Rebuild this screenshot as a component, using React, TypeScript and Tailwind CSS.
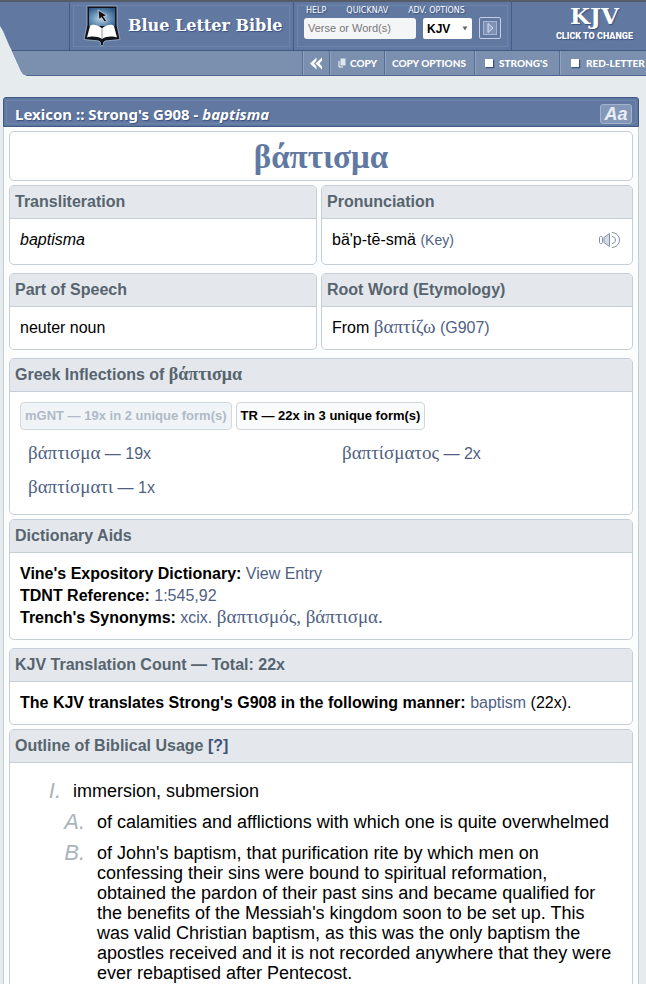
import type { ReactNode } from 'react';

const shadow = '[text-shadow:1px_1px_1px_#3a5180]';
const greekFont = "font-['Liberation_Serif',serif]";
const linkColor = 'text-[#4f5f83]';

const inflections = [
  { word: 'βάπτισμα', count: '19x' },
  { word: 'βαπτίσματος', count: '2x' },
  { word: 'βαπτίσματι', count: '1x' },
];

const outline = [
  { mark: 'A.', text: 'of calamities and afflictions with which one is quite overwhelmed' },
  {
    mark: 'B.',
    text: "of John's baptism, that purification rite by which men on confessing their sins were bound to spiritual reformation, obtained the pardon of their past sins and became qualified for the benefits of the Messiah's kingdom soon to be set up. This was valid Christian baptism, as this was the only baptism the apostles received and it is not recorded anywhere that they were ever rebaptised after Pentecost.",
  },
];

const Greek = ({ children }: { children: ReactNode }) => (
  <span lang="el" className={`text-[19px] leading-none ${greekFont}`}>{children}</span>
);

const Card = ({ title, children }: { title: ReactNode; children: ReactNode }) => (
  <section className="overflow-hidden rounded-[5px] border border-[#c5cdd7] bg-white">
    <h2 className="h-[33px] border-b border-[#c5cdd7] bg-[#e4e8ec] px-[5px] text-base leading-8 font-bold text-[#57646f]">
      {title}
    </h2>
    {children}
  </section>
);

const Logo = () => (
  <svg width="40" height="42" viewBox="0 1 40 42" className="overflow-visible" aria-hidden="true">
    <defs>
      <radialGradient id="screen" cx="0.45" cy="0.6" r="0.7">
        <stop offset="0" stopColor="#b9d3e6" />
        <stop offset="0.5" stopColor="#6a93b8" />
        <stop offset="1" stopColor="#2b5684" />
      </radialGradient>
    </defs>
    <path d="M5.500 1h28q1.500 0 1.500 1.500V20l3 14.500-15 1.500-1.500 1.500v2l-1.500 1.500-1.500-1.500v-2L17 36 2 34.500 5 20V2.500Q5 1 5.500 1z" fill="#11151b" stroke="#a9bbd0" strokeWidth="0.8" />
    <rect x="7" y="3" width="26" height="18" fill="url(#screen)" />
    <path d="M16 5l1 9.500 2.500-2 3 4.500 2-1.500-3-4 3.500-1z" fill="#111" stroke="#e8eef4" strokeWidth="0.7" />
    <path d="M20 23.500C16 19.500 10 19 8 21L5 32.500c4-1.500 10.500-1.500 15 1.500 4.500-3 11-3 15-1.500l-3-11.500C30 19 24 19.500 20 23.500z" fill="#fff" />
    <path d="M20 23.500V34" stroke="#8e98a4" strokeWidth="1" />
  </svg>
);

const Speaker = () => (
  <svg width="23" height="18" viewBox="0 0 23 18" fill="none" stroke="#8092ac" strokeWidth="1" aria-hidden="true">
    <rect x="0.500" y="5.500" width="3" height="7" rx="1" />
    <path d="M5 6.500L10.500 2.500v13L5 11.500z" fill="#d3dbe6" />
    <path d="M13 5.500a3.500 3.500 0 010 7M13 1.500a7.500 7.500 0 010 15" />
  </svg>
);

const toolItem = 'flex h-full shrink-0 items-center border-l border-[#566d96] shadow-[inset_1px_0_0_#8fa2bf] whitespace-nowrap';

const Toolbar = () => (
  <nav className="h-[25px] bg-[#4c6593] [clip-path:polygon(12px_0,100%_0,100%_100%,27px_100%,23px_23px,21px_20px)]">
    <div className={`flex h-6 items-center justify-end bg-[#7b8fae] font-['Lato',sans-serif] text-[10px] font-black text-white ${shadow}`}>
      <button type="button" aria-label="Collapse" className={`${toolItem} w-[27px] justify-center`}>
        <svg width="14" height="13" viewBox="0 0 14 13" fill="#fff" aria-hidden="true">
          <path d="M7.500 0.500L1 6.500l6.500 6V9.500L5 6.500l2.500-3z" />
          <path d="M13 0.500L6.500 6.500l6.500 6V9.500L10.500 6.500l2.500-3z" />
        </svg>
      </button>
      <button type="button" className={`${toolItem} w-[55px] gap-1 pl-2`}>
        <svg width="8" height="10" viewBox="0 0 8 10" aria-hidden="true">
          <path d="M1 3v6h4" fill="none" stroke="#fff" />
          <rect x="2.500" y="0.500" width="5" height="7" fill="#dfe8f3" />
        </svg>
        COPY
      </button>
      <button type="button" className={`${toolItem} w-[90px] pl-[7px]`}>COPY OPTIONS</button>
      <button type="button" className={`${toolItem} w-[85px] gap-[6px] pl-2.5`}>
        <span className="size-2 bg-white shadow-[1px_1px_1px_#3a5180]" />
        STRONG'S
      </button>
      <button type="button" className={`${toolItem} w-[87px] gap-[7px] pl-[11px]`}>
        <span className="size-2 bg-white shadow-[1px_1px_1px_#3a5180]" />
        RED-LETTER
      </button>
    </div>
  </nav>
);

const panel = 'm-[3px] border border-[#6d84ab]';

const Header = () => (
  <header className="border-t-2 border-[#555c68]">
    <div className="flex h-[49px] border-b border-[#3f5987] bg-[#6179a1] [clip-path:polygon(0_0,100%_0,100%_100%,12px_100%,9px_43px,3px_29px,0_24px)]">
      <div className="w-[69px] shrink-0" />
      <div className="w-56 shrink-0 border-l border-[#425c8b]">
        <a href="#home" className={`${panel} flex h-[42px] items-start gap-1.5 pl-2`}>
          <Logo />
          <span className={`pt-2.5 font-['DejaVu_Serif',serif] text-[16px] leading-5 font-bold whitespace-nowrap text-white ${shadow}`}>
            Blue Letter Bible
          </span>
        </a>
      </div>
      <form className="w-[218px] shrink-0 border-l border-[#425c8b]">
        <div className={`${panel} h-[42px] pl-[6px]`}>
          <div className={`flex h-2.5 items-center gap-5 pl-[2px] font-['DejaVu_Sans',sans-serif] text-[8px] leading-[10px] whitespace-nowrap text-white ${shadow}`}>
            <a href="#help">HELP</a>
            <a href="#quicknav">QUICKNAV</a>
            <a href="#options">ADV. OPTIONS</a>
          </div>
          <div className="flex items-center gap-[7px] pt-px">
            <input
              aria-label="Verse or Word(s)"
              placeholder="Verse or Word(s)"
              className="h-[21px] w-28 rounded-[3px] bg-[#f4f5f7] px-1 text-[11px] placeholder:text-[#777]"
            />
            <div className="relative">
              <select aria-label="Version" className="block h-[21px] w-[49px] appearance-none rounded-[2px] bg-white pl-1 text-[12px] font-bold text-black">
                <option>KJV</option>
              </select>
              <svg width="6" height="5" viewBox="0 0 6 5" className="pointer-events-none absolute top-2 right-1" aria-hidden="true">
                <path d="M0.500 0.500h5L3 4.500z" fill="#666" />
              </svg>
            </div>
            <button type="submit" aria-label="Go" className="flex size-[22px] items-center justify-center rounded-[2px] border border-[#c3d0e4]">
              <svg width="16" height="16" viewBox="0 0 16 16" aria-hidden="true">
                <rect x="1.500" y="1.500" width="13" height="13" fill="#7d92b6" stroke="#a5b5cf" />
                <path d="M6 3.500L11 8l-5 4.500z" fill="#8fa2c2" stroke="#d6dfed" />
              </svg>
            </button>
          </div>
        </div>
      </form>
      <div className="grow border-l border-[#425c8b]">
        <button type="button" className={`flex h-full w-full flex-col items-end pr-[13px] text-white ${shadow}`}>
          <span className="flex flex-col items-center">
            <span className="font-['DejaVu_Serif',serif] text-[23px] leading-7 font-bold">KJV</span>
            <span className="font-['Roboto',sans-serif] text-[9px] leading-3 font-black whitespace-nowrap">CLICK TO CHANGE</span>
          </span>
        </button>
      </div>
    </div>
    <Toolbar />
  </header>
);

const App = () => {
  return (
    <div className="min-h-screen bg-[#e6ebee] font-['Liberation_Sans',Arial,sans-serif] text-base leading-[22px] text-black">
      <Header />
      <main className="mt-[21px] mr-[7px] ml-[3px]">
        <div className={`flex h-[30px] items-center justify-between rounded-t-[3px] border border-[#3f5987] bg-[#6179a1] pr-[6px] pl-[11px] text-white shadow-[inset_0_0_0_2px_#6179a1,inset_0_0_0_3px_#6d84ab] ${shadow}`}>
          <h1 className="pt-1 font-['Noto_Sans',sans-serif] text-[15px] leading-5 font-bold">
            Lexicon :: Strong's G908 - <em>baptisma</em>
          </h1>
          <button type="button" aria-label="Text size" className="mt-[3px] h-5 w-8 rounded-[3px] border border-[#a3b3cc] bg-[#8497b8] text-[18px] leading-[18px] font-bold text-[#e8eef6] italic">
            Aa
          </button>
        </div>

        <div className="flex flex-col gap-2 border-x border-[#c5cdd7] bg-[#fcfdfd] px-[5px] pt-1">
          <div className="flex flex-col gap-1">
            <div lang="el" className={`h-[50px] rounded-[5px] border border-[#c5cdd7] bg-white text-center text-[33px] leading-[50px] font-bold text-[#6179a1] ${greekFont}`}>
              βάπτισμα
            </div>
            <div className="grid grid-cols-[77fr_78fr] gap-1">
              <Card title="Transliteration">
                <p className="px-2.5 pt-2.5 pb-[13px] italic">baptisma</p>
              </Card>
              <Card title="Pronunciation">
                <div className="flex items-center justify-between px-2.5 pt-2.5 pb-[13px]">
                  <p>
                    bä'p-tē-smä <a href="#key" className={`text-sm leading-none ${linkColor}`}>(Key)</a>
                  </p>
                  <button type="button" aria-label="Listen">
                    <Speaker />
                  </button>
                </div>
              </Card>
            </div>
          </div>

          <div className="grid grid-cols-[77fr_78fr] gap-1">
            <Card title="Part of Speech">
              <p className="p-2.5">neuter noun</p>
            </Card>
            <Card title="Root Word (Etymology)">
              <p className="p-2.5">
                From <a href="#g907" className={linkColor}><Greek>βαπτίζω</Greek> (G907)</a>
              </p>
            </Card>
          </div>

          <div className="flex flex-col gap-1">
            <Card title={<>Greek Inflections of <span lang="el" className={`text-[18px] leading-none ${greekFont}`}>βάπτισμα</span></>}>
              <div className="flex gap-1 px-2.5 pt-2.5 pb-[7px] text-[13px] leading-[26px] font-bold whitespace-nowrap">
                <button type="button" className="rounded-[4px] border border-[#d0dade] bg-[#f0f4f6] px-1 text-[#b0b9c8]">
                  mGNT — 19x in 2 unique form(s)
                </button>
                <button type="button" className="rounded-[4px] border border-[#d0d5da] bg-[#fafbfb] px-1">
                  TR — 22x in 3 unique form(s)
                </button>
              </div>
              <ul className="grid grid-cols-2 gap-x-6 pb-[9px] pl-[18px] leading-[34px]">
                {inflections.map((item) => (
                  <li key={item.word} className="h-[34px]">
                    <a href="#inflection" className={linkColor}><Greek>{item.word}</Greek> — {item.count}</a>
                  </li>
                ))}
              </ul>
            </Card>

            <Card title="Dictionary Aids">
              <div className="p-2.5">
                <p className="h-[22px]"><b>Vine's Expository Dictionary:</b> <a href="#vine" className={linkColor}>View Entry</a></p>
                <p className="h-[22px]"><b>TDNT Reference:</b> <a href="#tdnt" className={linkColor}>1:545,92</a></p>
                <p className="h-[22px]">
                  <b>Trench's Synonyms:</b> <a href="#trench" className={linkColor}>xcix. <Greek>βαπτισμός, βάπτισμα.</Greek></a>
                </p>
              </div>
            </Card>
          </div>

          <div className="flex flex-col gap-1">
            <Card title="KJV Translation Count — Total: 22x">
              <p className="p-2.5">
                <b>The KJV translates Strong's G908 in the following manner:</b>{' '}
                <a href="#baptism" className={linkColor}>baptism</a> (22x).
              </p>
            </Card>

            <Card title={<>Outline of Biblical Usage <a href="#usage" className="text-[#3f5277]">[?]</a></>}>
              <ol className="pt-[18px] pr-[18px] pb-10 pl-9 text-[18px] leading-5">
                <li>
                  <div className="flex">
                    <span className="w-[27px] shrink-0 pr-3 text-right text-[22px] text-[#a9b4bc] italic">I.</span>
                    immersion, submersion
                  </div>
                  <ol className="mt-[11px] flex flex-col gap-[11px] pl-[15px]">
                    {outline.map((item) => (
                      <li key={item.mark} className="flex">
                        <span className="flex w-9 shrink-0 justify-end pr-3 text-[22px] text-[#a9b4bc] italic">{item.mark}</span>
                        <p>{item.text}</p>
                      </li>
                    ))}
                  </ol>
                </li>
              </ol>
            </Card>
          </div>
        </div>
      </main>
    </div>
  );
};

export default App;
